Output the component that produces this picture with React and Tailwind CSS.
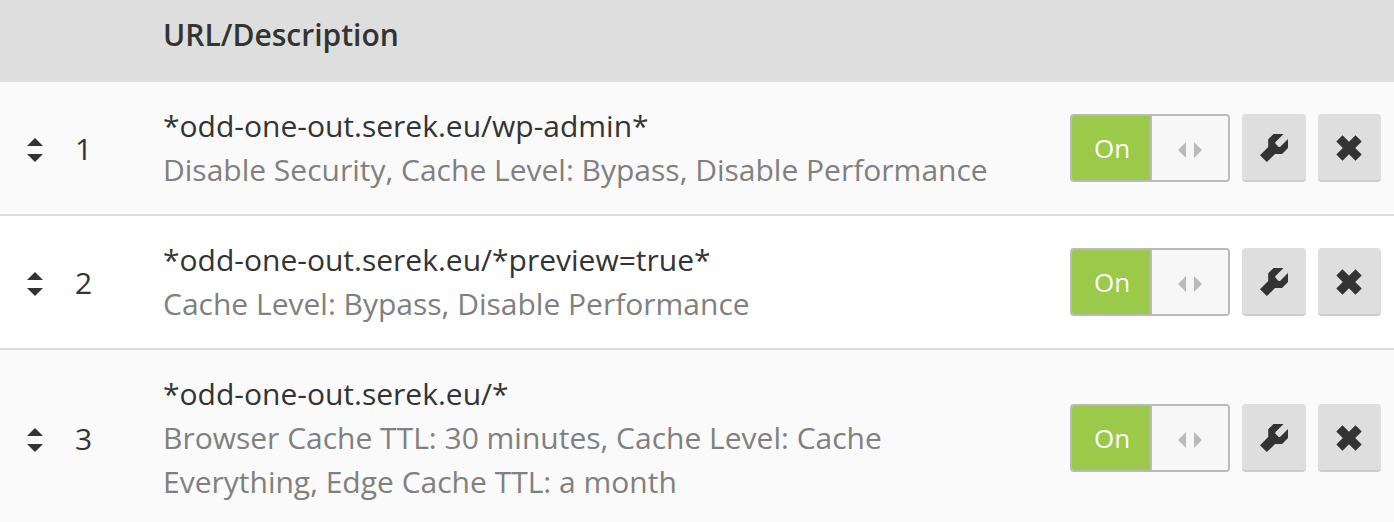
import { useState } from "react";

const initialRules = [
  {
    id: 1,
    url: "*odd-one-out.serek.eu/wp-admin*",
    description: "Disable Security, Cache Level: Bypass, Disable Performance",
  },
  {
    id: 2,
    url: "*odd-one-out.serek.eu/*preview=true*",
    description: "Cache Level: Bypass, Disable Performance",
  },
  {
    id: 3,
    url: "*odd-one-out.serek.eu/*",
    description:
      "Browser Cache TTL: 30 minutes, Cache Level: Cache Everything, Edge Cache TTL: a month",
  },
];

function SortIcon() {
  return (
    <svg width="16" height="24" viewBox="0 0 16 24" fill="currentColor" aria-hidden="true">
      <path d="M8 0 16 8H0ZM0 16H16L8 24Z" />
    </svg>
  );
}

function ArrowsIcon() {
  return (
    <svg width="24" height="16" viewBox="0 0 24 16" fill="currentColor" aria-hidden="true">
      <path d="M8 0V16L0 8ZM16 0 24 8 16 16Z" />
    </svg>
  );
}

function WrenchIcon() {
  return (
    <svg width="28" height="28" viewBox="0 0 28 28" fill="currentColor" aria-hidden="true">
      <path d="M13.5 0H23.5L15.3 8.2V9.6L18.7 13H20L28 5V14L22 20H15L6.8 28 0 21.2 8.2 13V5.3Z" />
    </svg>
  );
}

function CrossIcon() {
  return (
    <svg width="26" height="26" viewBox="0 0 26 26" fill="currentColor" aria-hidden="true">
      <path d="M6.5 0.3 13 6.8 19.5 0.3 25.7 6.5 19.2 13 25.7 19.5 19.5 25.7 13 19.2 6.5 25.7 0.3 19.5 6.8 13 0.3 6.5Z" />
    </svg>
  );
}

function Toggle({ label }) {
  const [on, setOn] = useState(true);
  const text = (
    <span className="flex flex-1 items-center justify-center bg-[#9bc949] pl-0.5 text-[26px] text-white">
      {on ? "On" : "Off"}
    </span>
  );
  const handle = (
    <span className="flex w-[78px] items-center justify-center border-l-2 border-[#bababa] bg-[#f7f7f7] pt-1 text-[#bababa]">
      <ArrowsIcon />
    </span>
  );
  return (
    <button
      type="button"
      role="switch"
      aria-checked={on}
      aria-label={label}
      onClick={() => setOn(!on)}
      className="flex h-[68px] w-40 overflow-hidden rounded border-2 border-[#bababa]"
    >
      {on ? text : handle}
      {on ? handle : text}
    </button>
  );
}

function IconButton({ label, children }) {
  return (
    <button
      type="button"
      aria-label={label}
      className="flex h-[68px] flex-1 items-center justify-center rounded border-b-2 border-[#cccccc] bg-[#dedede] pt-0.5"
    >
      {children}
    </button>
  );
}

function RuleRow({ rule }) {
  return (
    <tr className="border-b-2 border-[#dddddd] odd:bg-[#fafafa] even:bg-white">
      <td className="pt-1 pl-[27px]">
        <button type="button" aria-label={`Reorder rule ${rule.id}`} className="block">
          <SortIcon />
        </button>
      </td>
      <td className="pt-0.5 leading-11">{rule.id}</td>
      <td className="py-[22px] pr-8 leading-11">
        <p>{rule.url}</p>
        <p className="text-[#808080]">{rule.description}</p>
      </td>
      <td className="pr-[13px]">
        <div className="flex justify-end gap-3">
          <Toggle label={`Rule ${rule.id} enabled`} />
          <IconButton label={`Edit rule ${rule.id}`}>
            <WrenchIcon />
          </IconButton>
          <IconButton label={`Delete rule ${rule.id}`}>
            <CrossIcon />
          </IconButton>
        </div>
      </td>
    </tr>
  );
}

export default function App() {
  return (
    <main className="max-h-screen overflow-hidden bg-white font-['Open_Sans',sans-serif] text-[30px] text-[#333333]">
      <table className="w-full table-fixed border-collapse text-left">
        <colgroup>
          <col className="w-[75px]" />
          <col className="w-[88px]" />
          <col />
          <col className="w-[324px]" />
        </colgroup>
        <thead>
          <tr className="bg-[#dedede]">
            <td />
            <td />
            <th scope="col" className="pt-[13px] pb-[25px] leading-11 font-semibold">
              URL/Description
            </th>
            <td />
          </tr>
        </thead>
        <tbody>
          {initialRules.map((rule) => (
            <RuleRow key={rule.id} rule={rule} />
          ))}
        </tbody>
      </table>
    </main>
  );
}
